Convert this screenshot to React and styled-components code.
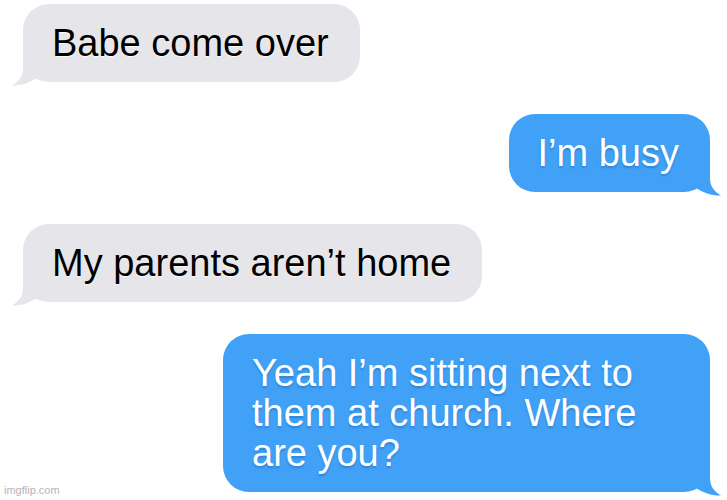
import styled, { createGlobalStyle } from 'styled-components';

const GlobalStyle = createGlobalStyle`
	html, body {
		margin: 0;
		padding: 0;
		background: #fff;
	}
	body {
		font-family: 'Liberation Sans', Arial, Helvetica, sans-serif;
	}
`;

const Screen = styled.div`
	position: relative;
	width: 727px;
	height: 500px;
	box-sizing: border-box;
	padding: 4px 17px 0 23px;
	display: flex;
	flex-direction: column;
	gap: 32px;
	background: #fff;
	overflow: hidden;
`;

const Row = styled.div`
	display: flex;
	justify-content: ${(p) => (p.$mine ? 'flex-end' : 'flex-start')};
`;

const Bubble = styled.div`
	position: relative;
	box-sizing: border-box;
	max-width: 487px;
	padding: 19px 31px 19px 29px;
	border-radius: 26px;
	font-size: 38px;
	line-height: 40px;
	background: ${(p) => (p.$mine ? '#41a1f6' : '#e5e5ea')};
	color: ${(p) => (p.$mine ? '#fff' : '#000')};
	text-shadow: ${(p) =>
		p.$mine
			? '0 2px 2px rgba(0, 70, 150, 0.3)'
			: '0 1px 1px rgba(255, 255, 255, 0.9)'};
`;

const TailSvg = styled.svg`
	position: absolute;
	bottom: -4px;
	width: 32px;
	height: 30px;
	${(p) =>
		p.$mine
			? 'right: -12px;'
			: 'left: -12px; transform: scaleX(-1);'}
`;

const Watermark = styled.div`
	position: absolute;
	left: 4px;
	bottom: 4px;
	font-size: 11px;
	color: #b4b4b4;
`;

const Tail = ({ mine }) => (
	<TailSvg $mine={mine} viewBox='0 0 32 30'>
		<path
			d='M20 0 L20 12 C20 19 23 25 31 29.5 C24 30 14 28 4 20.5 L4 0 Z'
			fill={mine ? '#41a1f6' : '#e5e5ea'}
		/>
	</TailSvg>
);

const messages = [
	{ mine: false, text: 'Babe come over' },
	{ mine: true, text: 'I’m busy' },
	{ mine: false, text: 'My parents aren’t home' },
	{ mine: true, text: 'Yeah I’m sitting next to them at church. Where are you?' },
];

const App = () => {
	return (
		<>
			<GlobalStyle />
			<Screen>
				{messages.map((m, i) => (
					<Row key={i} $mine={m.mine}>
						<Bubble $mine={m.mine}>
							{m.text}
							<Tail mine={m.mine} />
						</Bubble>
					</Row>
				))}
				<Watermark>imgflip.com</Watermark>
			</Screen>
		</>
	);
};

export default App;
